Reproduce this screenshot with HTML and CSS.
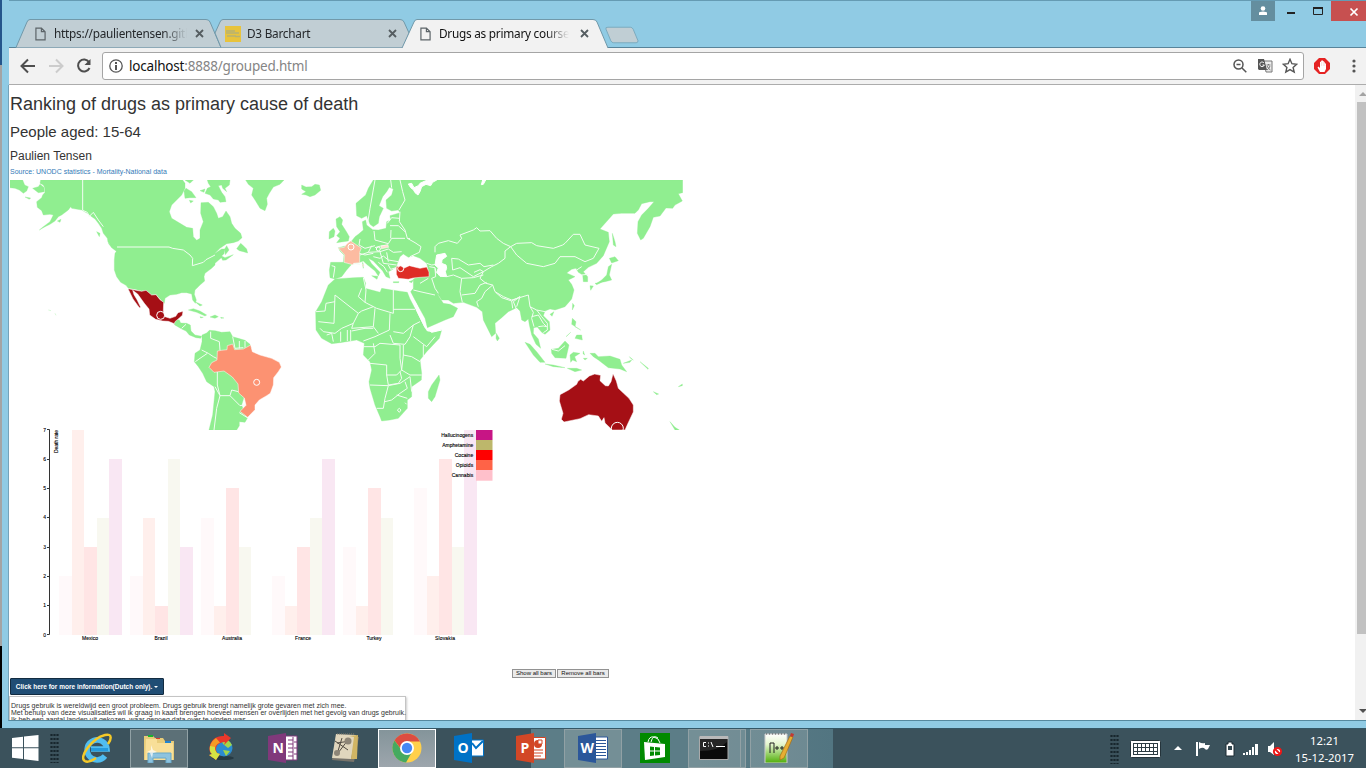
FILE: index.html
```html
<!DOCTYPE html>
<html lang="en">
<head>
<meta charset="utf-8">
<title>Drugs as primary course of death</title>
<link rel="stylesheet" href="styles.css">
</head>
<body>
<div class="desktop">
<div class="window">
<header class="titlebar">
  <div class="tabs">
    <div class="tab">
      <svg class="tab-shape" viewBox="0 0 206 29"><path d="M0 28.500 11 3Q12 .5 14 .5H190Q193 .5 194 3L205 28.500"/></svg>
      <svg class="page-icon" viewBox="0 0 12 15"><path d="M1 1H7L11 5V14H1ZM7 1V5H11"/></svg>
      <span class="tab-label first">https://paulientensen.gitl</span>
      <svg class="tab-close" viewBox="0 0 9 9"><path d="M1 1 8 8M8 1 1 8"/></svg>
    </div>
    <div class="tab second">
      <svg class="tab-shape" viewBox="0 0 206 29"><path d="M6 28.500 0 14 5 3Q6 .5 8 .5H185Q188 .5 189 3L194 14 188 28.500"/></svg>
      <svg class="yellow-icon" viewBox="0 0 16 16"><rect width="16" height="16" fill="#e8c33c"/><path d="M1 5H10M1 7H14M2 10H11M10 10.500H15" stroke="#b5b274" stroke-width="1.500"/></svg>
      <span class="tab-label">D3 Barchart</span>
      <svg class="tab-close" viewBox="0 0 9 9"><path d="M1 1 8 8M8 1 1 8"/></svg>
    </div>
    <div class="tab active">
      <svg class="tab-shape" viewBox="0 0 206 29"><path d="M0 29 12 3Q13 .5 15 .5H191Q194 .5 195 3L206 29"/></svg>
      <svg class="page-icon" viewBox="0 0 12 15"><path d="M1 1H7L11 5V14H1ZM7 1V5H11"/></svg>
      <span class="tab-label">Drugs as primary course</span>
      <svg class="tab-close" viewBox="0 0 9 9"><path d="M1 1 8 8M8 1 1 8"/></svg>
    </div>
    <svg class="new-tab" viewBox="0 0 35 18"><path d="M1 3Q0 1 3 1H26Q28 1 29 3L34 15Q34 17 32 17H9Q7 17 6 15Z" fill="#c0ced4" stroke="#7ba9bd"/></svg>
  </div>
  <div class="controls">
    <svg class="user" viewBox="0 0 24 20"><circle cx="12" cy="7.500" r="2.300"/><path d="M8 14V12Q8 10.500 12 10.500T16 12V14Z"/></svg>
    <svg class="min" viewBox="0 0 8 2"><path fill="#222" d="M0 0H8V2H0Z"/></svg>
    <svg class="max" viewBox="0 0 10 8"><path d="M.5 1H9.500V7.500H.5Z" fill="none" stroke="#222"/><path d="M0 0H10V2H0Z" fill="#222"/></svg>
    <svg class="close" viewBox="0 0 35 20"><path d="M19.500 7.500 26.500 14.500M26.500 7.500 19.500 14.500" stroke="#fff" stroke-width="1.700"/></svg>
  </div>
</header>
<div class="toolbar">
  <svg class="nav" viewBox="0 0 90 28"><g fill="none" stroke-width="2"><path stroke="#4e4e4e" d="M26 14H13M19 7.500 12.500 14 19 20.500"/><path stroke="#ccc" d="M40 14H53M47 7.500 53.500 14 47 20.500"/><path stroke="#4e4e4e" d="M80 10A6 6 0 1 0 80.500 16"/></g><path d="M81.500 7V13H75.500Z" fill="#4e4e4e"/></svg>
  <div class="address">
    <svg class="info" viewBox="0 0 14 14"><circle cx="7" cy="7" r="6.200" fill="none" stroke="#555" stroke-width="1.300"/><path d="M6 3H8V5H6ZM6 6H8V11H6Z" fill="#555"/></svg>
    <span class="url">localhost<i>:8888/grouped.html</i></span>
    <svg class="zoom" viewBox="0 0 14 14"><g fill="none" stroke="#555" stroke-width="1.500"><circle cx="5.500" cy="5.500" r="4.500"/><path d="M9 9 13.300 13.300M3.500 5.500H7.500"/></g></svg>
    <svg class="translate" viewBox="0 0 15 14"><path d="M6 2H14V13H8Z" fill="#eee" stroke="#777"/><path d="M0 0H6L9 11H1L0 10Z" fill="#555"/><path d="M6 4A2.300 2.300 0 1 0 6.300 6H4.500" fill="none" stroke="#fff"/><path d="M8.500 6H12.500M10.500 5V6M12 7Q11 10 9 11M9 7Q10.500 10 12.500 11" fill="none" stroke="#777"/></svg>
    <svg class="star" viewBox="0 0 16 16"><path d="M8 1.300 9.900 5.700 14.700 6.200 11.100 9.400 12.200 14 8 11.600 3.800 14 4.900 9.400 1.300 6.200 6.100 5.700Z" fill="none" stroke="#555" stroke-width="1.400"/></svg>
  </div>
  <svg class="adblock" viewBox="0 0 16 16"><path d="M5 0H11L16 5V11L11 16H5L0 11V5Z" fill="#e52323"/><path d="M6 14 3.500 9.500 4.500 8.500 6 10V4L7 3.500 8 2 9 3 10 3.500 11 5 12 6V11L10.500 14Z" fill="#fff"/><path d="M7.500 4V8M9.300 4V8M10.800 5V8" stroke="#f0b5b5" stroke-width=".4"/></svg>
  <svg class="menu" viewBox="0 0 4 14"><circle cx="2" cy="2" r="1.600"/><circle cx="2" cy="7" r="1.600"/><circle cx="2" cy="12" r="1.600"/></svg>
</div>
<div class="viewport">
<main class="page">
  <h1>Ranking of drugs as primary cause of death</h1>
  <h2>People aged: 15-64</h2>
  <h3>Paulien Tensen</h3>
  <a class="source">Source: UNODC statistics - Mortality-National data</a>
  <svg class="map" viewBox="30 15 2019 750">
    <g class="land">
      <path d="M30 15H68L74 30 85 35 80 48 70 55 58 45 45 40 30 38ZM75 66 92 69 88 73ZM98 40 115 35 120 28 133 38 133 50 115 53ZM122 15H548L555 25 555 40 545 60 530 75 515 90 508 110 515 130 540 145 560 157 578 160 580 185 590 196 600 190 600 165 610 140 602 115 603 83 625 82 640 95 650 115 655 130 668 125 678 108 690 125 695 145 705 160 722 175 726 188 715 198 700 203 680 206 660 220 643 236 665 222 675 222 672 236 665 243 675 248 700 239 678 255 668 256 664 248 645 265 645 270 635 280 615 295 612 305 614 318 600 330 585 345 583 358 589 375 586 385 578 375 575 357 560 353 545 353 530 358 510 360 495 370 493 385 480 372 468 358 455 360 438 345 425 348 405 343 385 340 378 331 362 322 350 305 343 285 343 255 345 235 352 225 338 215 324 202 322 190 310 175 305 160 295 145 285 132 275 125 262 115 245 105 215 100 212 95 205 105 185 120 175 125 165 138 150 148 135 155 118 165 130 155 150 140 160 120 150 118 130 120 125 107 112 97 110 80 125 68 128 60 135 52 135 40 130 30 120 25Z"/>
      <path d="M290 170 300 175 298 185ZM325 205 340 210 354 226 352 231 335 218ZM172 138 183 133 180 142ZM552 48 558 40 575 50 588 68 570 68 555 70ZM568 76 580 78 572 84ZM600 47 615 42 612 52ZM622 15H690L688 30 675 40 680 50 668 40 665 30 655 32 665 52 675 65 678 80 660 82 655 75 640 72 630 60 615 55 622 40 632 35 625 25ZM555 15H580L570 25ZM737 15H852L840 28 820 36 808 55 800 70 802 88 795 107 780 100 765 75 755 60 760 40 745 28ZM905 30 918 36 935 35 945 28 958 30 962 46 945 60 930 65 918 60 905 58 918 50 905 42ZM710 221 722 205 728 210 740 222 743 234 730 230 718 227ZM674 222 680 212 687 225 676 239ZM565 405 580 401 600 408 620 420 615 423 590 412ZM630 426 645 420 655 425 645 430ZM662 427 672 429 663 430ZM600 425 610 427 602 429ZM585 380 607 390 600 393Z"/>
      <path d="M526 432 538 435 542 444 560 445 571 450 573 468 585 480 605 484 602 490 588 488 568 480 558 468 545 462 523 449ZM606 480 620 474 628 466 645 467 665 472 690 470 698 485 715 490 735 496 750 508 752 518 747 560 740 640 725 690 735 718 742 730 735 742 718 740 718 752 710 765H627L638 720 645 650 642 635 620 620 608 595 595 575 583 560 585 535 600 525 606 500Z"/>
      <path d="M1008 132 1020 125 1028 135 1025 148 1038 168 1048 185 1045 198 1010 203 1020 190 1010 182 1020 170 1010 155ZM988 170 1000 160 1005 168 1002 185 987 192ZM145 405 153 407M165 415 168 421"/>
    </g>
    <g class="land" transform="translate(960 0)">
      <path d="M160 15H1088V53L1075 56 1087 78 1065 90 1058 100 1038 99 1020 123 1000 127 990 155 970 190 962 195 952 175 954 140 965 120 985 100 1002 80 990 80 965 86 955 105 945 115 905 115 880 117 840 162 865 172 868 200 850 242 830 265 805 277 790 290 803 305 803 320 790 320 788 300 775 292 768 280 755 283 740 294 765 305 745 315 755 328 762 345 755 372 735 395 705 405 690 402 675 408 670 422 688 440 690 465 675 478 665 472 652 456 641 458 640 475 655 492 662 520 648 508 635 480 628 450 625 432 615 440 605 435 600 408 590 398 565 410 545 428 525 445 527 475 515 485 490 435 487 410 470 397 430 382 400 385 385 375 365 375 350 352 358 367 370 385 390 388 413 400 400 425 375 435 322 458 315 430 290 385 272 350 280 340 280 312 300 300 325 285 320 265 300 250 280 242 265 247 250 237 240 245 232 265 230 275 215 285 205 290 210 310 198 305 188 288 160 258 145 250 155 266 180 292 175 303 165 288 140 268 130 258 120 262 95 268 80 285 65 305 45 312 30 308 28 285 32 262 70 262 72 240 60 228 55 218 80 212 85 205 95 198 105 185 115 178 130 165 127 140 137 135 140 150 158 164 175 165 198 160 200 140 212 135 210 122 240 113 235 105 215 108 200 100 198 75 215 60 220 42 208 37 200 50 188 65 182 80 177 92 190 100 178 125 175 145 160 155 150 148 140 122 125 130 110 122 108 85 137 60 145 40Z"/>
      <path d="M45 312 100 308 130 307 137 325 135 340 155 345 180 352 185 340 215 345 250 350 262 352 270 372 290 410 305 440 320 468 342 470 365 465 358 490 320 530 300 555 305 595 304 615 275 635 275 665 262 675 262 700 235 730 210 735 185 738 180 725 165 690 150 640 147 620 155 585 150 560 130 540 133 505 110 495 60 503 35 506 5 490 -12 465 -13 410 5 380 15 355 25 330ZM357 600 360 615 345 665 335 680 325 670 325 650 335 630Z"/>
      <path d="M128 262 131 270 130 280 127 270ZM155 302 174 304 171 313ZM220 320 237 320 236 323 220 323ZM267 320 280 315 275 323ZM877 175 885 200 888 215 880 210ZM868 250 885 245 895 257 875 264ZM875 268 868 300 875 315 855 320 830 325 845 315 860 300 865 275ZM810 332 820 333 812 346ZM825 325 845 322 830 329ZM758 385 763 392 757 405ZM690 418 702 410 696 424ZM529 475 538 490 532 498 528 490ZM757 430 768 440 765 455 782 465 755 448ZM770 480 785 480 787 495 765 490ZM738 485 752 472 742 482ZM615 502 630 508 650 530 675 562 660 562 640 540ZM675 567 700 570 735 578 700 575ZM694 523 715 520 735 498 747 510 738 550 705 548 695 535ZM750 540 760 532 780 535 764 545 770 560 758 555 752 562ZM790 528 794 540 789 536ZM790 550 802 550 795 555ZM742 580 770 580 785 585 765 590ZM810 535 825 535 835 545 870 543 900 553 905 570 920 590 900 582 865 578 835 555 820 545ZM910 565 935 555 930 562ZM928 545 940 555 934 552ZM960 560 985 580 984 583ZM1000 650 1016 657 1010 659ZM1075 635 1087 627 1087 632ZM1050 740 1065 757 1078 765H1065Z"/>
    </g>
    <g class="borders">
      <path d="M248 15V106L262 112 268 124 280 112 295 135 310 155M351 216H507L518 220 550 225 570 240 578 250 577 272 610 262 618 254 645 240M632 470V490L658 500 660 526M605 525 625 535 640 545 650 550M586 560 600 550 622 535M652 590V630L660 662H690L695 645 715 650M645 635 660 662 650 700 642 765M690 662 720 692 735 690M718 713 742 728M698 485 705 520 730 518M718 498V520M735 498V518M558 448 545 460"/>
      <g transform="translate(960 0)">
      <path d="M165 15 150 100 143 145M212 15 215 38M240 15 248 50 255 75 237 105M240 110 238 140 255 165 262 190 285 203 303 215 298 232 270 245M210 152 235 152 255 170M162 168 165 195 205 206 215 190 255 190M120 192 117 210 135 220 165 212M155 212 145 232 120 240M145 232 180 230 205 222 220 232 245 230M180 230 190 265 230 270M200 232 205 260M35 272 45 275 40 308M80 262 120 268M262 190 270 191M202 145 215 128 238 130M212 190 213 165M118 235 135 240 160 235M165 218 182 213 205 210M160 245 180 250 190 243 205 255 235 260M175 262 192 275 202 292M205 270 212 283 228 278M328 275 345 278 348 295M320 265 335 270 350 268"/>
      <path d="M345 232 345 215 355 205 385 197 412 205 425 190 420 180 460 165 470 158 480 168 510 167 530 190 550 205 572 215 590 205 635 203 650 212 700 220 728 210 735 205 760 178 780 178 795 210 837 220 820 250 795 260 765 245 720 245 705 265 670 275 620 265 590 240 572 215 555 228 555 250 535 265 515 275 490 290 480 310 498 325 518 330 525 350 550 365 575 375 625 360 630 395 650 405 675 410M395 250 415 252 445 270 480 265 492 275 520 270M395 250 398 285 420 278 460 305 490 290M462 292 480 284 490 290M380 305 400 300 425 310 460 308 490 300M425 310 420 350 427 382M425 360 465 355 480 330 500 322M518 330 495 350 485 370 470 380 475 395M527 352 545 368 575 378 600 365 590 395M600 365 580 380 590 405M575 378 578 400M635 425 655 420 670 445 680 455M650 405 665 425 682 445 682 465 670 473M630 395 640 412 635 430 642 455M655 455 670 453 680 455M345 280 347 305 335 310 345 340 355 355M280 345 300 350 345 360M300 325 325 310M785 300 803 298M770 285 785 275M696 523 715 528 735 512"/>
      <path d="M130 308 138 345 135 382 170 400 220 415V345M220 403H285M45 360 115 415 125 408 160 395M45 360 42 445-5 440M-12 410 15 408 18 385 45 380M115 415 100 445 65 460 45 475 10 470 0 460M100 445 95 460 160 455 165 400M210 415 208 465 165 485 130 498M160 455 175 475M220 470 250 475 280 450 300 440M280 450 270 485 255 508 220 505 210 480M280 485 320 515 345 485M310 510V545M20 480 35 475 40 500M62 470V500M82 465V498M92 465V498M130 515H165L180 505 240 510 240 550 245 585 230 600 200 600 200 570 150 565M250 510V540L275 545 300 560M250 540 245 585 270 600 305 600M200 600 205 630 235 625 245 610 240 590M150 630 205 632 195 670 190 700 170 700M205 632 240 625 270 605 275 650M195 680 215 675 240 655 262 640 255 620M230 660 262 670M238 700 232 705 238 712 243 705ZM255 683 260 688M160 505 165 535 145 555M95 468 135 460 160 460M135 382 115 365 125 340"/>
      <path class="sea" d="M350 240 375 235 380 244 366 254 365 265 378 270 380 280 376 290 380 305 360 304 350 292 355 279 345 270ZM265 27 275 25 282 38 295 32 300 25 315 18 325 15H350L338 22 332 32 318 28 305 35 300 50 294 60 285 53 280 44 272 38ZM484 29 488 15H497L490 28ZM269 356 288 385 304 420 323 468 365 465 335 472 315 458 294 415Z"/>
      </g>
    </g>
    <g class="data">
      <path fill="#a50f15" d="M384 341 404 345 425 349 438 346 455 360 468 359 480 374 491 382 490 407 495 425 510 430 527 424 534 413 549 409 547 421 538 429 525 440 523 446 505 439 488 438 467 433 449 420 447 402 433 385 413 357 398 346 402 359 411 374 422 397 418 398 399 372Z"/>
      <path fill="#fc9272" d="M652 528 665 526 681 524 682 512 698 507 704 524 730 522 752 510 757 530 780 540 815 550 838 562 844 576 835 590 821 608 820 630 811 655 800 662 778 675 765 690 765 704 743 727 720 709 738 691 733 669 716 654 714 627 697 606 672 588 642 592 627 577 635 563 651 555Z"/>
      <g transform="translate(960 0)">
        <path fill="#fcbba1" d="M55 219 73 217 80 207 92 198 110 210 124 219 119 232 119 263 101 265 98 269 72 262 74 240ZM128 267 131 268 131 274 128 275Z"/>
        <path fill="#de2d26" d="M229 275 243 272 253 279 268 272 280 275 300 280 320 276 327 291V305L300 307 280 309 265 313 235 310 229 298Z"/>
        <path fill="#fee0d2" d="M183 213 203 209 206 217 184 221Z"/>
        <path fill="#a50f15" d="M720 659 746 645 770 628 774 619 782 613 790 618 808 603 824 597 842 601 840 617 856 632 865 633 873 620 879 596 889 618 895 640 910 654 927 670 940 690 940 711 923 747 915 765H877L855 744 852 728 845 739 835 723 806 719 780 731 732 741 724 733 729 715 718 678Z"/>
      </g>
      <g class="rings"><circle cx="482" cy="421" r="12"/><circle cx="770" cy="622" r="9"/><circle cx="1053" cy="216" r="9"/><circle cx="1135" cy="222" r="6"/><circle cx="1202" cy="281" r="9"/><circle cx="1852" cy="760" r="18"/></g>
    </g>
  </svg>
  <svg class="chart" viewBox="10 430 500 239">
    <g class="bars">
      <g transform="translate(59 634.800) scale(12.500 -29.260)"><rect class="cannabis" width="1" height="2"/><rect class="opioids" x="1" width="1" height="7"/><rect class="cocaine" x="2" width="1" height="3"/><rect class="amphetamine" x="3" width="1" height="4"/><rect class="hallucinogens" x="4" width="1" height="6"/></g>
      <g transform="translate(130 634.800) scale(12.500 -29.260)"><rect class="cannabis" width="1" height="2"/><rect class="opioids" x="1" width="1" height="4"/><rect class="cocaine" x="2" width="1" height="1"/><rect class="amphetamine" x="3" width="1" height="6"/><rect class="hallucinogens" x="4" width="1" height="3"/></g>
      <g transform="translate(201 634.800) scale(12.500 -29.260)"><rect class="cannabis" width="1" height="4"/><rect class="opioids" x="1" width="1" height="1"/><rect class="cocaine" x="2" width="1" height="5"/><rect class="amphetamine" x="3" width="1" height="3"/></g>
      <g transform="translate(272 634.800) scale(12.500 -29.260)"><rect class="cannabis" width="1" height="2"/><rect class="opioids" x="1" width="1" height="1"/><rect class="cocaine" x="2" width="1" height="3"/><rect class="amphetamine" x="3" width="1" height="4"/><rect class="hallucinogens" x="4" width="1" height="6"/></g>
      <g transform="translate(343 634.800) scale(12.500 -29.260)"><rect class="cannabis" width="1" height="3"/><rect class="opioids" x="1" width="1" height="1"/><rect class="cocaine" x="2" width="1" height="5"/><rect class="amphetamine" x="3" width="1" height="4"/></g>
      <g transform="translate(414 634.800) scale(12.500 -29.260)"><rect class="cannabis" width="1" height="5"/><rect class="opioids" x="1" width="1" height="2"/><rect class="cocaine" x="2" width="1" height="6"/><rect class="amphetamine" x="3" width="1" height="3"/><rect class="hallucinogens" x="4" width="1" height="7"/></g>
    </g>
    <path class="axis" d="M47 429.500H49.500V634.500H47M47 459.500H50M47 488.500H50M47 517.500H50M47 547.500H50M47 576.500H50M47 605.500H50"/>
    <g class="ticks"><text x="46" y="432">7</text><text x="46" y="461">6</text><text x="46" y="490">5</text><text x="46" y="519">4</text><text x="46" y="549">3</text><text x="46" y="578">2</text><text x="46" y="607">1</text><text x="46" y="637">0</text><text transform="translate(57.500 430) rotate(-90)" textLength="23">Death rate</text></g>
    <g class="names"><text x="90" y="640" textLength="16">Mexico</text><text x="161" y="640" textLength="13">Brazil</text><text x="232" y="640" textLength="20">Australia</text><text x="303" y="640" textLength="16">France</text><text x="374" y="640" textLength="15">Turkey</text><text x="445" y="640" textLength="20">Slovakia</text></g>
    <g class="legend"><rect class="hallucinogens" x="476" y="430" width="16.500" height="10"/><rect class="amphetamine" x="476" y="440" width="16.500" height="10"/><rect class="cocaine" x="476" y="450" width="16.500" height="10"/><rect class="opioids" x="476" y="460" width="16.500" height="10"/><rect class="cannabis" x="476" y="470" width="16.500" height="10.700"/></g>
    <g class="ticks"><text x="473.200" y="437" textLength="32">Hallucinogens</text><text x="473.200" y="447" textLength="31">Amphetamine</text><text x="473.200" y="457" textLength="18.500">Cocaine</text><text x="473.200" y="467" textLength="17.500">Opioids</text><text x="473.200" y="477" textLength="21.500">Cannabis</text></g>
  </svg>
  <div class="bar-buttons"><button>Show all bars</button><button class="remove">Remove all bars</button></div>
  <button class="more">Click here for more information(Dutch only). <span class="caret"></span></button>
  <div class="details"><p>Drugs gebruik is wereldwijd een groot probleem. Drugs gebruik brengt namelijk grote gevaren met zich mee.</p><p>Met behulp van deze visualisaties wil ik graag in kaart brengen hoeveel mensen er overlijden met het gevolg van drugs gebruik.</p><p>Ik heb een aantal landen uit gekozen, waar genoeg data over te vinden was.</p></div>
</main>
<div class="scrollbar"><svg viewBox="0 0 8 6"><path d="M1 5 5 1 9 5Z" fill="#a3a3a3"/></svg><div class="thumb"></div><svg viewBox="0 0 8 6"><path d="M1 1H9L5 5Z" fill="#505050"/></svg></div>
</div>
</div>
<footer class="taskbar">
  <div class="start"><svg viewBox="0 0 27 26"><path fill="#fff" d="M0 3 11 1.700V12.300H0ZM12 1.600 26.500 0V12.300H12ZM0 13.300H11V24L0 22.700ZM12 13.300H26.500V26L12 24.200Z"/></svg></div>
  <div class="grip"></div>
  <div class="apps">
    <div class="app"><svg viewBox="0 0 30 30"><path d="M23 23A10 10 0 1 1 25 16H9" fill="none" stroke="#50bdf0" stroke-width="5.500"/><path d="M9 16.500H26" stroke="#249bdd" stroke-width="3"/><path d="M3 28C-4 25 10 5 23 2 31 0 29 7 26 11M3 28C6 30 11 27 14 25" fill="none" stroke="#f5c928" stroke-width="2.500"/></svg></div>
    <div class="app open"><svg class="folder" viewBox="0 0 32 30"><path d="M1 3H10L12 5H20L22 8H31V27H1Z" fill="#e8cc79"/><path d="M3 6H14V10H30V27H2Z" fill="#f8df98"/><path d="M5 2H10V4H5Z" fill="#1ab32f"/><path d="M13 5H17V6H13Z" fill="#dc3d2f"/><path d="M22 8H28V10H22Z" fill="#2184cf"/><path d="M5 20H28V30H23V25H10V30H5Z" fill="#8dc3df" stroke="#69a9ca"/><path d="M8 12 10 17 14 19 10 20 9 25 7 20 4 19 8 17Z" fill="#fff" opacity=".7"/></svg></div>
    <div class="app"><svg viewBox="0 0 30 30"><ellipse cx="17" cy="25" rx="11" ry="2" fill="#263a43"/><circle cx="18" cy="15" r="8.500" fill="#2b8cd0"/><path d="M15 6Q23 5 26 12L22 15 17 11ZM17 17 24 18 20 23Z" fill="#a1d64b"/><path d="M18 3C3 2 1 19 6 21L3 22 10 27 14 21 11 20C8 14 12 9 19 9L18 12 25 5 18 0Z" fill="#e9382b"/><path d="M10 5Q3 10 4 17L9 18Q8 12 14 9.500Z" fill="#f69b25"/><path d="M4 13Q3 19 6 21L3 22 10 27 14 21 11 20Q8.500 17 9 14Z" fill="#d5e343"/></svg></div>
    <div class="app"><svg viewBox="0 0 30 30"><path fill="#fff" stroke="#80397b" d="M17 3H29V27H17Z"/><path d="M20 7H25M20 11H25M20 15H25M20 19H25M20 23H25M25 4V27" stroke="#80397b"/><path d="M26 9H29M26 15H29M26 21H29" stroke="#80397b"/><path fill="#80397b" d="M0 3 18 0V30L0 27Z"/><text x="4.500" y="20">N</text></svg></div>
    <div class="app"><svg viewBox="0 0 30 30"><path d="M6 2 29 4 24 29 2 27Z" fill="#77736a"/><path d="M6 1 26 2 21 26 2 25Z" fill="#e0d6bd"/><path d="M19 3 28 2 27 26 21 26 24 4Z" fill="#d1b564"/><path d="M5 8 18 17M8 20 18 7M12 5 8 18M7 10 20 8" stroke="#514b42"/><circle cx="18" cy="8" r="3.500" fill="#8d8577"/><circle cx="7" cy="20" r="3" fill="#8d8577"/><path d="M7 1H24" stroke="#8a806d" stroke-dasharray="1 1"/></svg></div>
    <div class="app open current"><svg viewBox="0 0 30 30"><circle cx="15" cy="15" r="14.500" fill="#ffd04b"/><path d="M2.500 7.500A14.500 14.500 0 0 1 28 8.500H15L9 16Z" fill="#dc4d41"/><path d="M2.500 7.500A14.500 14.500 0 0 0 14 29.500L20 19H11Z" fill="#45aa60"/><circle cx="15" cy="15" r="7" fill="#fff"/><circle cx="15" cy="15" r="5.200" fill="#4688f4"/></svg></div>
    <div class="app"><svg viewBox="0 0 30 30"><path fill="#fff" stroke="#0072c6" d="M15 7H29.500V23H15Z"/><path d="M18 10 22 15 29 8" fill="none" stroke="#0072c6" stroke-width="2"/><path fill="#0072c6" d="M0 3 18 0V30L0 27Z"/><text x="3.500" y="20">O</text></svg></div>
    <div class="app"><svg viewBox="0 0 30 30"><path fill="#fff" stroke="#d24726" d="M15 4.500H29.500V26H15Z"/><circle cx="22" cy="11" r="4" fill="#d24726"/><path d="M22 11V7H26V11ZM18 17H27M18 20H27M18 23H25" stroke="#d24726" fill="#fff"/><path fill="#d24726" d="M0 3 18 0V30L0 27Z"/><text x="4.500" y="20">P</text></svg></div>
    <div class="app open"><svg viewBox="0 0 30 30"><path fill="#fff" stroke="#2b579a" d="M15 4H29.500V26H15Z"/><path d="M18 7.500H28M18 10.500H28M18 13.500H28M18 16.500H28M18 19.500H28M18 22.500H28" stroke="#2b579a"/><path fill="#2b579a" d="M0 3 18 0V30L0 27Z"/><text x="2.500" y="20">W</text></svg></div>
    <div class="app"><svg viewBox="0 0 30 30"><path fill="#008a00" d="M0 0H30V30H0Z"/><path d="M8 9Q9 3 14 4T20 10M11 9Q13 1 18 5" fill="none" stroke="#fff"/><path d="M4 9 25 11V24L5 27Z" fill="#fff"/><path d="M10 13.500 14 14V17.500H10ZM15 14 20 14.500V17.500H15ZM10 18.500H14V22.500L10 23ZM15 18.500H20V22L15 22.500Z" fill="#008a00"/></svg></div>
    <div class="app open cmd"><svg viewBox="0 0 30 30"><path fill="#0a0a0a" stroke="#aaa" d="M.5 3.500H29V26.500H.5Z"/><path fill="#b9b9b9" d="M1 3H29V6H1Z"/><path d="M1 18Q20 18 28 9V6H1Z" fill="#252525"/><path d="M7 9.500H4.500V13.500H7M9 10H10M9 13H10M12 9 14 14M17 13.500H26" fill="none" stroke="#fff"/></svg></div>
    <div class="app open"><svg viewBox="0 0 30 30"><defs><linearGradient id="lime" x2="0" y2="1"><stop stop-color="#fff"/><stop offset=".35" stop-color="#e5f6cf"/><stop offset="1" stop-color="#4fae08"/></linearGradient></defs><path d="M1 1H23V30H1Z" fill="url(#lime)" stroke="#ccc"/><path d="M2 1H22" stroke="#555" stroke-dasharray="1 2"/><path d="M6 20V10H10V20M11 15H15M13 13V17M16 15H20M18 13V17" fill="none" stroke="#222"/><path d="M16 23 26 3 29 4 20 25 16 27Z" fill="#e7ae32" stroke="#a56b16" stroke-width=".7"/><path d="M26 3 27 0 30 1 29 4Z" fill="#c43831"/></svg></div>
  </div>
  <div class="tray"><div class="grip"></div>
    <svg class="keyboard" viewBox="0 0 31 18"><rect x=".5" y=".5" width="30" height="17" rx="1" fill="#fff" stroke="#25343b"/><path d="M3 3H28V15H3Z" fill="#2c3b42"/><path d="M4 5.500H27M4 9.500H27" stroke="#fff" stroke-width="3" stroke-dasharray="3 1"/><path d="M4 13H7M8 13H23M24 13H27" stroke="#fff" stroke-width="2"/></svg>
    <svg class="up" viewBox="0 0 8 5"><path d="M0 4 4 0 8 4Z" fill="#fff"/></svg>
    <svg class="flag" viewBox="0 0 16 16"><path d="M1 1H3V15H1ZM4 1Q7 3 10 2V4H15L13 8Q11 10 9 7 7 6 4 8Z" fill="#fff"/></svg>
    <svg class="battery" viewBox="0 0 10 16"><path d="M3 1H7V3H9V15H1V3H3Z" fill="#fff" stroke="#1c2b32"/><path d="M3 5H7V9H3Z" fill="#344850"/></svg>
    <svg class="signal" viewBox="0 0 16 12"><path d="M0 10H2V12H0ZM3 9H5V12H3ZM6 7H8V12H6ZM9 4H11V12H9ZM12 1H15V12H12Z" fill="#fff"/></svg>
    <svg class="sound" viewBox="0 0 16 16"><path d="M1 5H3L7 1V14L3 11H1Z" fill="#fff"/><circle cx="10.500" cy="10.500" r="3.600" fill="#fff" stroke="#ed1717" stroke-width="2"/><path d="M8 8 13 13" stroke="#ed1717" stroke-width="2"/></svg>
    <div class="clock"><span>12:21</span><span>15-12-2017</span></div>
  </div>
</footer>
</div>
</body>
</html>
```

FILE: styles.css
```css
* { box-sizing: border-box; }
body { margin: 0; background: #fff; overflow: hidden; }
svg { display: block; flex: none; }
.desktop { width: 1366px; height: 768px; display: flex; flex-direction: column; background: #fff; }
.window { height: 728px; border-left: 2px solid #888; border-image: linear-gradient(#24558b 0 66px, #a4a4a4 66px 645px, #000 645px) 1; border-width: 0 0 0 2px; display: flex; flex-direction: column; background: #90cbe4; }
.titlebar { height: 48px; display: flex; justify-content: space-between; border-top: 1px solid #659bb3; border-bottom: 1px solid #58849a; margin-left: 7px; }
.tabs { display: flex; padding: 18px 0 0 7px; font: 11.8px "Noto Sans", sans-serif; letter-spacing: -.25px; color: #25282b; }
.tab { width: 206px; height: 29px; position: relative; display: flex; align-items: center; padding-left: 19px; margin-right: -7px; }
.second { padding-left: 10px; margin-right: -19px; }
.active { padding-left: 18px; margin-right: 0; color: #111; z-index: 2; }
.tab-shape { position: absolute; left: 0; top: 0; width: 206px; height: 29px; fill: #c1ced4; stroke: #7199aa; overflow: visible; }
.active .tab-shape { fill: #f2f2f2; }
.page-icon { position: relative; width: 11px; height: 14px; margin-right: 8px; fill: none; stroke: #5c6468; stroke-width: 1.3; }
.yellow-icon { position: relative; width: 16px; height: 16px; margin-right: 6px; }
.tab-label { position: relative; white-space: nowrap; width: 133px; height: 19px; line-height: 19px; -webkit-mask-image: linear-gradient(90deg, #000 82%, transparent); }
.tab-close { position: relative; width: 9px; height: 9px; margin-left: 8px; stroke: #555d61; stroke-width: 1.8; }
.active .tab-close { margin-left: 11px; }
.active .tab-label { width: 130px; }
.new-tab { width: 34px; height: 18px; margin: 7px 0 0 -3px; }
.controls { display: flex; height: 20px; align-items: center; }
.user { width: 24px; height: 20px; background: #648e9f; fill: #fff; }
.min { width: 8px; height: 2px; margin: 4px 0 0 12px; }
.max { width: 10px; height: 8px; margin: 0 8px 0 18px; }
.close { width: 35px; height: 20px; background: #c75050; }
.toolbar { height: 37px; margin-left: 7px; background: #f2f2f2; border-bottom: 1px solid #acacac; display: flex; align-items: center; }
.nav { width: 90px; height: 28px; }
.address { width: 1202px; height: 28px; margin-left: 3px; background: #fff; border: 1px solid #a5a5a5; border-radius: 3px; display: flex; align-items: center; padding: 0 5px 0 6px; }
.info { width: 14px; height: 14px; }
.url { margin-left: 6px; font: 13.5px "Noto Sans", sans-serif; letter-spacing: -.2px; color: #111; white-space: nowrap; }
.url i { font-style: normal; color: #858585; }
.zoom { width: 14px; height: 14px; margin-left: auto; }
.translate { width: 15px; height: 14px; margin-left: 11px; }
.star { width: 16px; height: 16px; margin-left: 9px; }
.adblock { width: 16px; height: 16px; margin-left: 10px; }
.menu { width: 4px; height: 14px; margin-left: 22px; fill: #555; }
.viewport { height: 636px; margin-left: 6px; border-left: 1px solid #75a3b9; border-bottom: 1px solid #55899f; display: flex; background: #fff; }
.page { width: 1346px; height: 635px; overflow: hidden; padding-left: 1px; display: flex; flex-direction: column; align-items: flex-start; color: #333; font-family: "Liberation Sans", sans-serif; }
h1, h2, h3, p { margin: 0; font-weight: 400; white-space: nowrap; }
h1 { font-size: 18px; line-height: 38px; }
h2 { font-size: 15px; line-height: 18px; }
h3 { font-size: 12px; line-height: 30px; height: 28px; }
.source { color: #337ab7; font-size: 7px; line-height: 6px; height: 11px; white-space: nowrap; }
.map { width: 673px; height: 250px; }
.land path { fill: #90ee90; stroke: #90ee90; stroke-width: 1; stroke-linejoin: round; }
.borders path { fill: none; stroke: #f2fdf2; stroke-width: 3; stroke-linejoin: round; }
.borders .sea { fill: #fff; stroke: #fff; }
.rings circle { fill: none; stroke: #fff; stroke-width: 3; }
.data > path, .data > g > path { stroke: #fff; stroke-width: 1.5; }
.chart { width: 500px; height: 239px; overflow: visible; font: 5px "Liberation Sans", sans-serif; }
.cannabis { fill: #ffc0cb; }
.opioids { fill: #ff6347; }
.cocaine { fill: #f00; }
.amphetamine { fill: #bdb76b; }
.hallucinogens { fill: #c71585; }
.bars rect { opacity: .1; shape-rendering: crispEdges; }
.axis { fill: none; stroke: #333; }
.ticks { text-anchor: end; }
.ticks text, .names text { stroke: #000; stroke-width: .12px; }
.names { text-anchor: middle; }
.bar-buttons { height: 9px; display: flex; gap: 1px; padding-left: 502px; }
.bar-buttons button { width: 44px; height: 9px; padding: 0; border: 1px solid #929292; background: #eaeaea; color: #111; font: 6px/7px "Liberation Sans", sans-serif; white-space: nowrap; }
.bar-buttons .remove { width: 52px; }
.more { height: 17px; width: 154px; padding: 0; color: #fff; background: #204d74; border: 1px solid #122b40; border-radius: 1px; font: bold 6.5px/14px "Liberation Sans", sans-serif; white-space: nowrap; }
.caret { display: inline-block; border: 2px solid transparent; border-top-color: #fff; border-bottom: 0; vertical-align: middle; }
.details { width: 397px; height: 24px; margin: 1px 0 0 -1px; padding: 5px 0 0 1px; border: 1px solid #c4c4c4; border-bottom: 0; font-size: 7px; line-height: 7px; box-shadow: 1px 1px 2px #ccc; }
.scrollbar { width: 11px; height: 635px; background: #f1f1f1; display: flex; flex-direction: column; align-items: flex-end; padding: 6px 0; }
.scrollbar svg { width: 8px; height: 6px; overflow: hidden; }
.thumb { width: 9px; height: 532px; margin: 5px 0 74px; background: #c1c1c1; }
.taskbar { height: 40px; display: flex; border-top: 1px solid #345766; background: linear-gradient(90deg, #3b525c 0 531px, #5c7d87 531px 700px, #527581 833px, #3b525c 833px); }
.start { width: 50px; display: flex; align-items: center; padding: 0 0 2px 12px; }
.start svg { width: 27px; height: 26px; }
.grip { width: 9px; height: 30px; margin-top: 4px; background: radial-gradient(circle, #17262d 0 1px, transparent 1.3px) 0 0 / 3px 4px; }
.apps { display: flex; gap: 4px; margin-left: 9px; }
.app { width: 58px; height: 39px; display: flex; align-items: center; justify-content: center; padding-bottom: 1px; }
.app svg { width: 30px; height: 30px; }
.app svg.folder { width: 32px; }
.app text { fill: #fff; font: bold 14px "Open Sans", sans-serif; }
.open { border: 1px solid #91a1a5; background: rgba(180,190,190,.28); }
.current { background: linear-gradient(#84949a, #9da6ad); border-color: #fff; }
.cmd { padding-right: 7px; box-shadow: inset -4px 0 #708c94, inset -5px 0 #91a1a5; }
.tray { display: flex; align-items: center; margin-left: auto; height: 39px; }
.tray .grip { margin: 0 11px 0 0; }
.keyboard { width: 31px; height: 18px; }
.up { width: 8px; height: 5px; margin-left: 13px; }
.flag { width: 16px; height: 16px; margin-left: 13px; }
.battery { width: 10px; height: 16px; margin-left: 14px; }
.signal { width: 16px; height: 12px; margin-left: 8px; }
.sound { width: 16px; height: 16px; margin-left: 8px; }
.clock { width: 59px; margin: 0 12px 0 12px; display: flex; flex-direction: column; align-items: center; color: #fff; font: 11.3px/17px "Noto Sans", sans-serif; white-space: nowrap; }
```
